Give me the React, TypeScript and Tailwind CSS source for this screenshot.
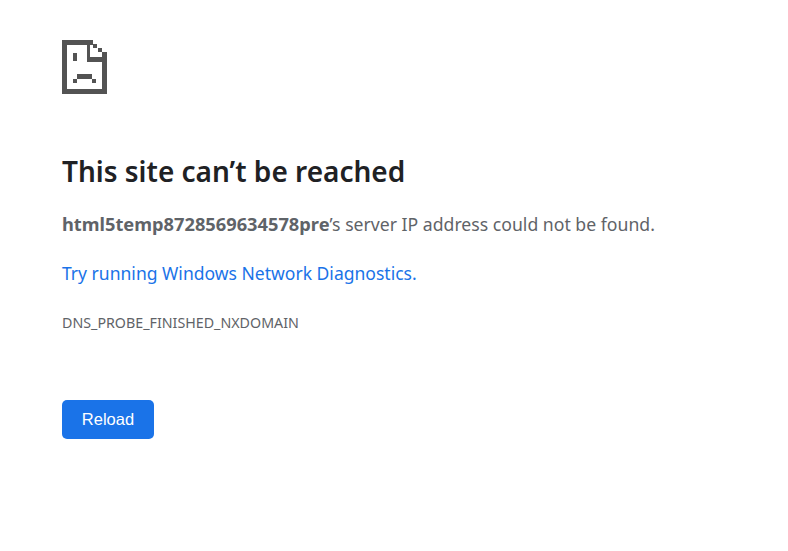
export default function App() {
  return (
    <div className="min-h-[551px] bg-white pl-[62px] pt-10 font-['Noto_Sans',sans-serif]">
      <svg width="45" height="54" viewBox="0 0 45 54" fill="#535353" className="block">
        <path d="M0 0H31V5H28V17H45V54H0ZM5 5V49H40V22H25V5Z" />
        <path d="M31 4H35V8H31ZM36 8H40V12H36ZM40 12H45V17H40Z" />
        <rect x="11" y="13" width="4" height="8" />
        <path d="M15 34H30V39H15ZM11 39H15V43H11ZM30 39H34V43H30Z" />
      </svg>
      <h1 className="mt-[57px] text-[28px] leading-[40px] font-semibold text-[#202124]">This site can’t be reached</h1>
      <p className="mt-[21px] text-[17.65px] leading-[24px] text-[#5f6368]">
        <strong className="text-[18.25px] font-bold">html5temp8728569634578pre</strong>’s server IP address could not be found.
      </p>
      <p className="mt-[25px] text-[17.55px] leading-[24px] text-[#1a73e8]">Try running Windows Network Diagnostics.</p>
      <p className="mt-[29px] text-[14.25px] leading-[18px] text-[#5f6368]">DNS_PROBE_FINISHED_NXDOMAIN</p>
      <button className="mt-[68px] block h-[39px] w-[92px] rounded-[5px] bg-[#1a73e8] font-['Liberation_Sans',sans-serif] text-[16.5px] text-white">Reload</button>
    </div>
  )
}
